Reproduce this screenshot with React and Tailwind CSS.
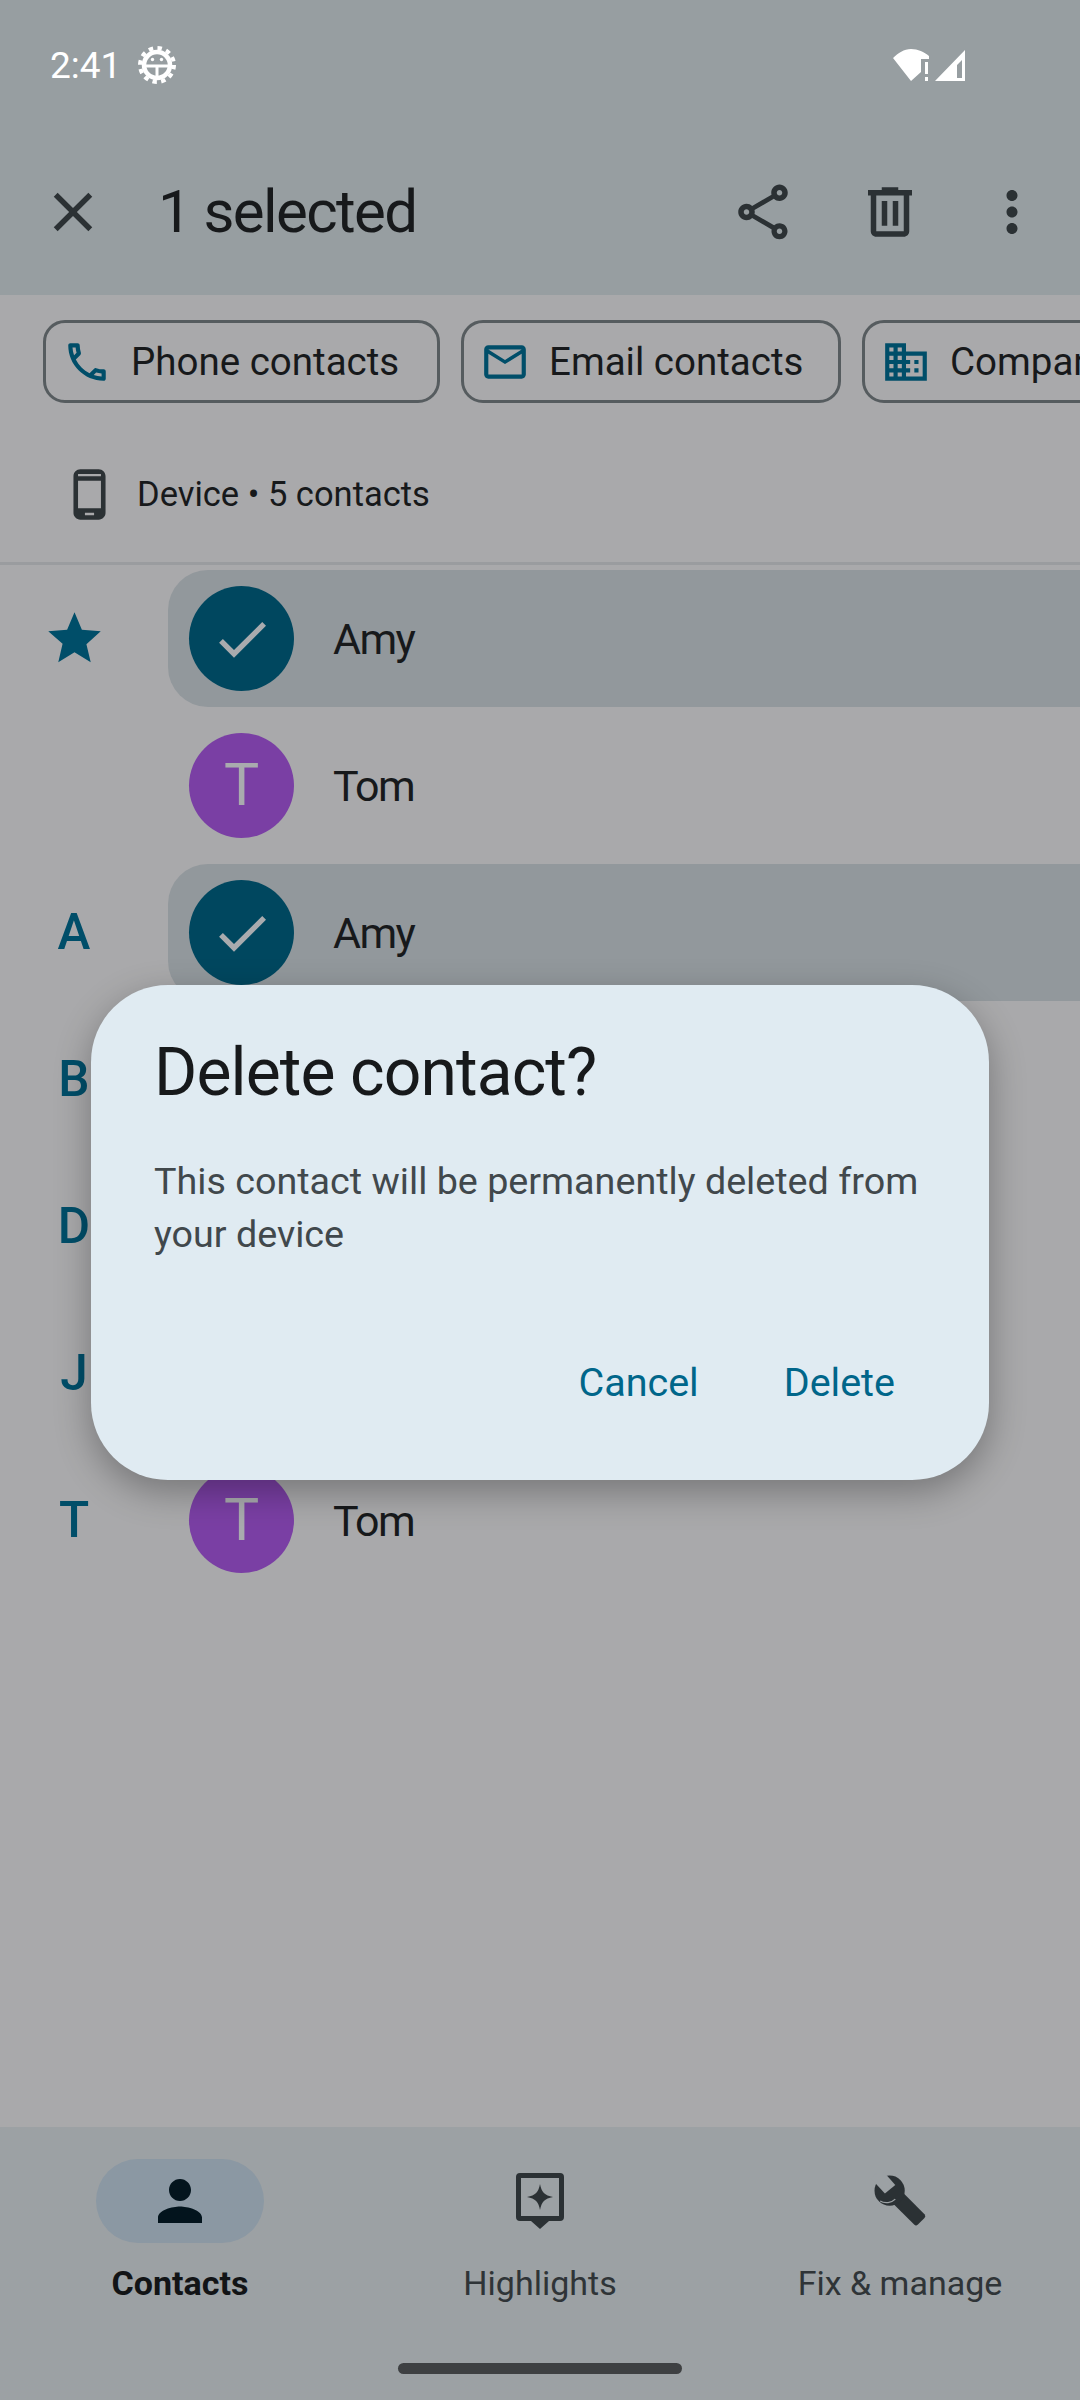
const ink = "#2b3134";

function Icon({ d, size = 66, color = ink, className = "" }) {
  return (
    <svg width={size} height={size} viewBox="0 0 24 24" fill={color} className={`shrink-0 ${className}`}>
      <path d={d} />
    </svg>
  );
}

const paths = {
  close: "M19 6.41L17.59 5 12 10.59 6.41 5 5 6.41 10.59 12 5 17.59 6.41 19 12 13.41 17.59 19 19 17.59 13.41 12z",
  share: "M18 16.08c-.76 0-1.44.3-1.96.77L8.91 12.7c.05-.23.09-.46.09-.7s-.04-.47-.09-.7l7.05-4.11c.54.5 1.25.81 2.04.81 1.66 0 3-1.34 3-3s-1.34-3-3-3-3 1.34-3 3c0 .24.04.47.09.7L8.04 9.81C7.5 9.31 6.79 9 6 9c-1.66 0-3 1.34-3 3s1.34 3 3 3c.79 0 1.5-.31 2.04-.81l7.12 4.16c-.05.21-.08.43-.08.65 0 1.61 1.31 2.92 2.92 2.92s2.92-1.31 2.92-2.92-1.31-2.92-2.92-2.92zM18 4c.55 0 1 .45 1 1s-.45 1-1 1-1-.45-1-1 .45-1 1-1zM6 13c-.55 0-1-.45-1-1s.45-1 1-1 1 .45 1 1-.45 1-1 1zm12 7.02c-.55 0-1-.45-1-1s.45-1 1-1 1 .45 1 1-.45 1-1 1z",
  trash: "M15 4V3H9v1H4v2h1v13c0 1.1.9 2 2 2h10c1.1 0 2-.9 2-2V6h1V4h-5zm2 15H7V6h10v13zM9 8h2v9H9zm4 0h2v9h-2z",
  more: "M12 8c1.1 0 2-.9 2-2s-.9-2-2-2-2 .9-2 2 .9 2 2 2zm0 2c-1.1 0-2 .9-2 2s.9 2 2 2 2-.9 2-2-.9-2-2-2zm0 6c-1.1 0-2 .9-2 2s.9 2 2 2 2-.9 2-2-.9-2-2-2z",
  phone: "M6.54 5c.06.89.21 1.76.45 2.59l-1.2 1.2c-.41-1.2-.67-2.47-.76-3.79h1.51m9.86 12.02c.85.24 1.72.39 2.6.45v1.49c-1.32-.09-2.59-.35-3.8-.75l1.2-1.19M7.5 3H4c-.55 0-1 .45-1 1 0 9.39 7.61 17 17 17 .55 0 1-.45 1-1v-3.49c0-.55-.45-1-1-1-1.24 0-2.45-.2-3.57-.57-.1-.04-.21-.05-.31-.05-.26 0-.51.1-.71.29l-2.2 2.2c-2.83-1.45-5.15-3.76-6.59-6.59l2.2-2.2c.28-.28.36-.67.25-1.02C8.7 6.45 8.5 5.25 8.5 4c0-.55-.45-1-1-1z",
  mail: "M20 4H4c-1.1 0-1.99.9-1.99 2L2 18c0 1.1.9 2 2 2h16c1.1 0 2-.9 2-2V6c0-1.1-.9-2-2-2zm0 14H4V8l8 5 8-5v10zm-8-7L4 6h16l-8 5z",
  company: "M12 7V3H2v18h20V7H12zM6 19H4v-2h2v2zm0-4H4v-2h2v2zm0-4H4V9h2v2zm0-4H4V5h2v2zm4 12H8v-2h2v2zm0-4H8v-2h2v2zm0-4H8V9h2v2zm0-4H8V5h2v2zm10 12h-8v-2h2v-2h-2v-2h2v-2h-2V9h8v10zm-2-8h-2v2h2v-2zm0 4h-2v2h2v-2z",
  device: "M16 1H8C6.34 1 5 2.34 5 4v16c0 1.66 1.34 3 3 3h8c1.66 0 3-1.34 3-3V4c0-1.66-1.34-3-3-3zm1 17H7V6h10v12zm-3 3h-4v-1h4v1zm3-17H7V3h10v1z",
  person: "M12 12c2.21 0 4-1.79 4-4s-1.79-4-4-4-4 1.79-4 4 1.79 4 4 4zm0 2c-2.67 0-8 1.34-8 4v2h16v-2c0-2.66-5.33-4-8-4z",
  star: "M12 17.27L18.18 21l-1.64-6.81L22 9.24l-7.19-.61L12 2 9.19 8.63 2 9.24l5.46 4.73L5.82 21z",
  check: "M9 16.17L4.83 12l-1.42 1.41L9 19 21 7l-1.41-1.41z",
};

function Chip({ icon, label, className }) {
  return (
    <div className={`h-[83px] shrink-0 flex items-center gap-[19px] pl-[16px] rounded-[22px] border-[3px] border-[#565c5f] ${className}`}>
      <Icon d={icon} size={50} color="#004e69" />
      <span className="text-[38.5px] text-[#17191b] whitespace-nowrap">{label}</span>
    </div>
  );
}

function Row({ letter, star, selected, name, initial }) {
  return (
    <div className="h-[147px] py-[5px] flex items-center">
      <div className="w-[168px] shrink-0 pl-[41px] flex items-center">
        {star && <Icon d={paths.star} size={63} color="#004e69" className="ml-[2px]" />}
        {letter && <span className="w-[66px] text-center text-[49.5px] font-medium text-[#004e69] leading-none">{letter}</span>}
      </div>
      {name && (
        <div className={`flex-1 h-full flex items-center pl-[21px] gap-[39px] rounded-l-[40px] ${selected ? "bg-[#92989c]" : ""}`}>
          {selected ? (
            <div className="w-[105px] h-[105px] rounded-full bg-[#00475f] flex items-center justify-center">
              <Icon d={paths.check} size={64} color="#a9abae" />
            </div>
          ) : (
            <div className="w-[105px] h-[105px] rounded-full bg-[#7a3fa4] flex items-center justify-center text-[59px] text-[#a9abae]">
              {initial}
            </div>
          )}
          <span className="pt-[2px] text-[43px] tracking-[-1.6px] text-[#17191b]">{name}</span>
        </div>
      )}
    </div>
  );
}

function NavItem({ label, active, children }) {
  return (
    <div className="flex flex-col items-center">
      <div className={`w-[168px] h-[84px] rounded-[42px] flex items-center justify-center ${active ? "bg-[#8b98a3]" : ""}`}>
        {children}
      </div>
      <span className={`mt-[21px] text-[34px] leading-[38px] whitespace-nowrap ${active ? "font-bold text-[#121416]" : "text-[#2f3437]"}`}>
        {label}
      </span>
    </div>
  );
}

export default function App() {
  return (
    <div className="relative w-[1080px] h-[2400px] overflow-hidden bg-[#a9a9ab] flex flex-col font-['Roboto',sans-serif]">
      {/* app bar */}
      <div className="h-[295px] shrink-0 bg-[#979ea1] flex flex-col">
        <div className="h-[128px] pt-[2px] pl-[50px] pr-[114px] flex items-center justify-between">
          <div className="flex items-center gap-[16px]">
            <span className="text-[37px] text-white leading-none">2:41</span>
            <svg width="40" height="40" viewBox="0 0 40 40">
              <circle cx="20" cy="20" r="17" fill="none" stroke="white" strokeWidth="4" strokeDasharray="4.45 4.45" />
              <circle cx="20" cy="20" r="13" fill="none" stroke="white" strokeWidth="4.5" />
              <path d="M8 21h24M20 21v13" stroke="white" strokeWidth="3" />
              <circle cx="15.500" cy="14.500" r="1.700" fill="white" />
              <circle cx="24.500" cy="14.500" r="1.700" fill="white" />
            </svg>
          </div>
          <svg width="73" height="33" viewBox="0 0 73 33" fill="white">
            <path d="M0 9C5 4 11 0 18 0c7 0 13 3 18 7v3h-8v13l-10 9z" />
            <path d="M32 13h3v12h-3zM32 28h3v4h-3z" />
            <path fillRule="evenodd" d="M42 32L72 1v31zM64 16l5-5v18h-5z" />
          </svg>
        </div>
        <div className="flex-1 flex items-center">
          <Icon d={paths.close} className="ml-[40px]" />
          <span className="ml-[52px] text-[60px] tracking-[-1.6px] text-[#17191b] leading-none">1 selected</span>
          <Icon d={paths.share} className="ml-auto" />
          <Icon d={paths.trash} className="ml-[61px]" />
          <Icon d={paths.more} className="ml-[56px] mr-[35px]" />
        </div>
      </div>

      {/* filter chips */}
      <div className="mt-[25px] ml-[43px] flex gap-[21px]">
        <Chip icon={paths.phone} label="Phone contacts" className="w-[397px]" />
        <Chip icon={paths.mail} label="Email contacts" className="w-[380px]" />
        <Chip icon={paths.company} label="Company" className="w-[300px]" />
      </div>

      {/* account row */}
      <div className="h-[162px] shrink-0 flex items-center pt-[24px] pl-[62px] border-b-[3px] border-[#9a9c9f]">
        <Icon d={paths.device} size={55} />
        <span className="ml-[20px] text-[34.500px] text-[#17191b]">Device • 5 contacts</span>
      </div>

      {/* contact list */}
      <Row star selected name="Amy" />
      <Row name="Tom" initial="T" />
      <Row letter="A" selected name="Amy" />
      <Row letter="B" />
      <Row letter="D" />
      <Row letter="J" />
      <Row letter="T" name="Tom" initial="T" />

      {/* bottom nav */}
      <div className="mt-auto h-[273px] shrink-0 bg-[#9ca1a4] relative">
        <div className="grid grid-cols-3 pt-[32px]">
          <NavItem label="Contacts" active>
            <Icon d={paths.person} color="#03141d" />
          </NavItem>
          <NavItem label="Highlights">
            <svg width="66" height="66" viewBox="0 0 66 66" fill={ink}>
              <path fillRule="evenodd" d="M13 5h40a4 4 0 0 1 4 4v40a4 4 0 0 1-4 4H42l-9 8-9-8H13a4 4 0 0 1-4-4V9a4 4 0 0 1 4-4zm1 5v38h38V10z" />
              <path d="M33 16c1.500 8 4.500 11.500 13 13-8.500 1.500-11.500 5-13 13-1.500-8-4.500-11.500-13-13 8.500-1.500 11.500-5 13-13z" />
            </svg>
          </NavItem>
          <NavItem label="Fix & manage">
            <svg width="66" height="66" viewBox="2 3 70 70" fill={ink}>
              <path d="M35 34l5-5 23 23a3 3 0 0 1 0 4l-7 7a3 3 0 0 1-4 0L29 40z" />
              <circle cx="26" cy="27" r="16" />
              <path d="M6 14l15 16 11-9L17 4z" fill="#9ca1a4" />
              <path d="M16 38c5 3 12 2 16-2" fill="none" stroke="#9ca1a4" strokeWidth="1.400" />
            </svg>
          </NavItem>
        </div>
        <div className="absolute bottom-[26px] left-[398px] w-[284px] h-[11px] rounded-full bg-[#3e4042]" />
      </div>

      {/* delete dialog */}
      <div className="absolute left-[91px] top-[985px] w-[898px] h-[495px] rounded-[77px] bg-[#e0ebf2] shadow-[0_12px_36px_rgba(0,0,0,0.3)] flex flex-col">
        <div className="ml-[63px] mt-[50px] text-[66px] tracking-[-0.9px] leading-[76px] text-[#17191b]">Delete contact?</div>
        <div className="ml-[63px] mr-[50px] mt-[44px] text-[37.700px] leading-[53px] text-[#41484c]">
          This contact will be permanently deleted from your device
        </div>
        <div className="mt-auto mb-[74px] flex justify-end gap-[85px] pr-[94px] text-[39.500px] leading-[46px] text-[#00668a]">
          <span>Cancel</span>
          <span>Delete</span>
        </div>
      </div>
    </div>
  );
}
